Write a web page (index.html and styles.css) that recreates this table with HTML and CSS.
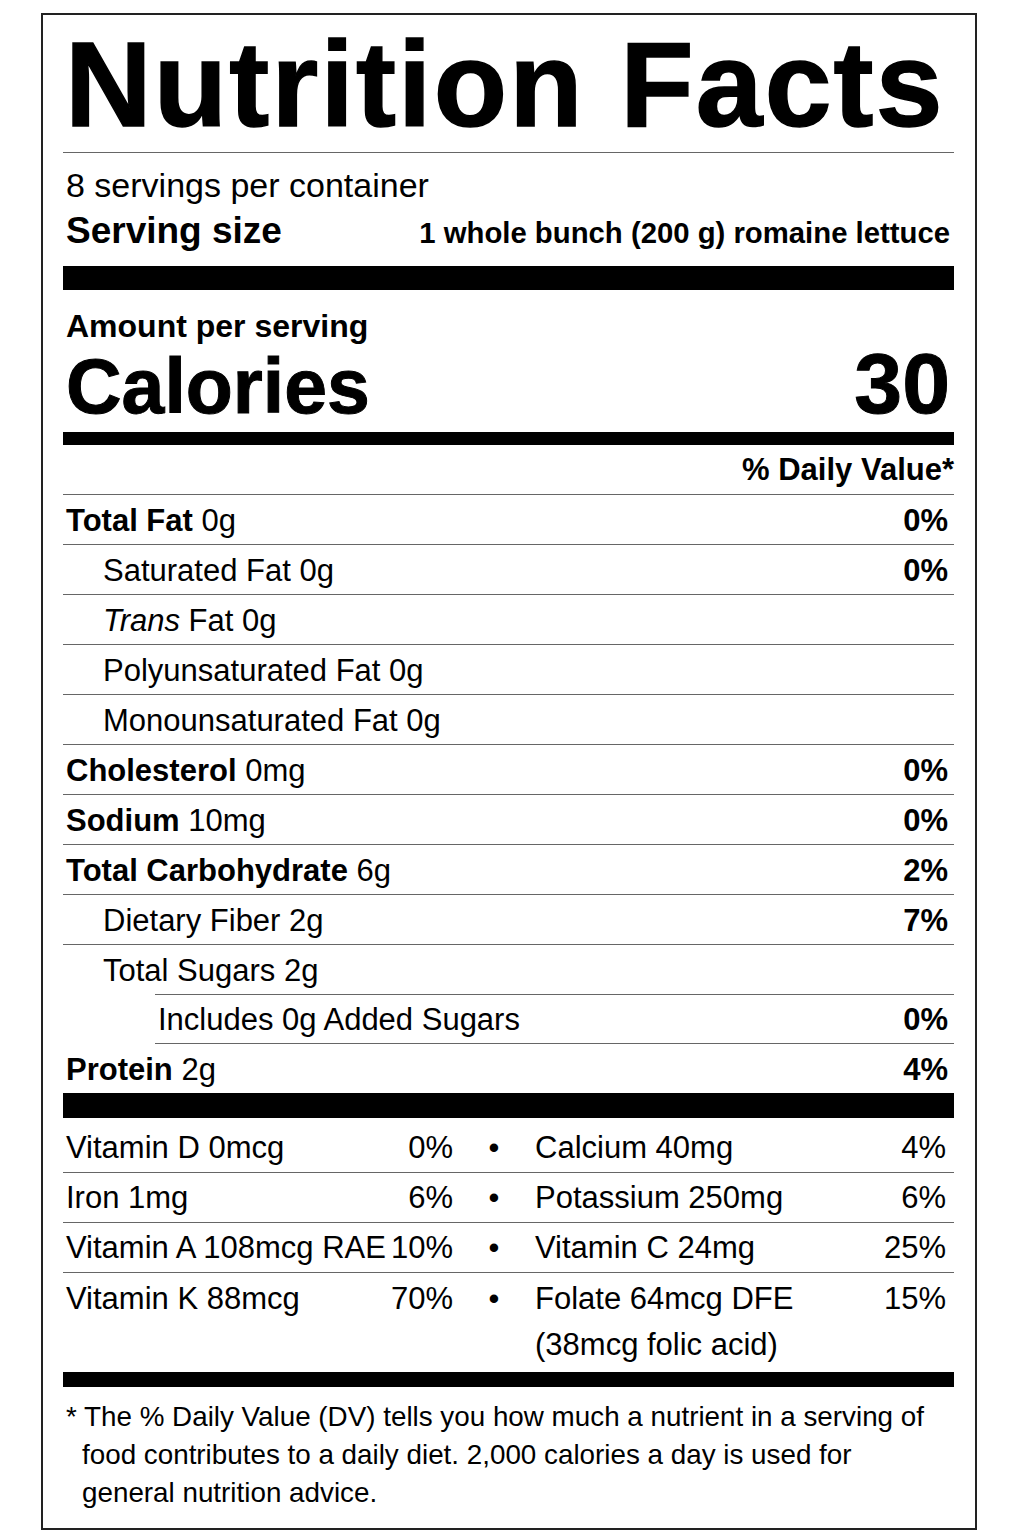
FILE: index.html
```html
<!DOCTYPE html>
<html lang="en">

<head>
    <meta charset="UTF-8">
    <meta name="viewport" content="width=device-width, initial-scale=1.0">
    <title>Nutrition Facts</title>
    <link rel="stylesheet" href="styles.css">
</head>

<body>

    <div class="label">
        <!-- Header -->
        <div class="title">Nutrition Facts</div>
        <div class="servings">8 servings per container</div>
        <div class="serving-size">
            <span class="bold">Serving size</span>
            <span class="size-value">1 whole bunch (200 g) romaine lettuce</span>
        </div>
        <div class="bar bar-thick"></div>

        <!-- Calories -->
        <div class="amount">Amount per serving</div>
        <div class="calories">
            <span class="cal-label">Calories</span>
            <span class="cal-value">30</span>
        </div>
        <div class="bar bar-medium"></div>

        <div class="dv-head">% Daily Value*</div>

        <!-- Nutrients -->
        <div class="row"><span><b>Total Fat</b> 0g</span><b>0%</b></div>
        <div class="row sub"><span>Saturated Fat 0g</span><b>0%</b></div>
        <div class="row sub"><span><i>Trans</i> Fat 0g</span></div>
        <div class="row sub"><span>Polyunsaturated Fat 0g</span></div>
        <div class="row sub"><span>Monounsaturated Fat 0g</span></div>
        <div class="row"><span><b>Cholesterol</b> 0mg</span><b>0%</b></div>
        <div class="row"><span><b>Sodium</b> 10mg</span><b>0%</b></div>
        <div class="row"><span><b>Total Carbohydrate</b> 6g</span><b>2%</b></div>
        <div class="row sub"><span>Dietary Fiber 2g</span><b>7%</b></div>
        <div class="row sub no-line"><span>Total Sugars 2g</span></div>
        <div class="row sub2"><span>Includes 0g Added Sugars</span><b>0%</b></div>
        <div class="row no-line"><span><b>Protein</b> 2g</span><b>4%</b></div>
        <div class="bar bar-thick"></div>

        <!-- Vitamins and minerals -->
        <div class="vitamins">
            <div class="vit-row first">
                <div class="vit"><span>Vitamin D 0mcg</span><span>0%</span></div>
                <div class="dot">&bull;</div>
                <div class="vit"><span>Calcium 40mg</span><span>4%</span></div>
            </div>
            <div class="vit-row">
                <div class="vit"><span>Iron 1mg</span><span>6%</span></div>
                <div class="dot">&bull;</div>
                <div class="vit"><span>Potassium 250mg</span><span>6%</span></div>
            </div>
            <div class="vit-row">
                <div class="vit"><span>Vitamin A 108mcg RAE</span><span>10%</span></div>
                <div class="dot">&bull;</div>
                <div class="vit"><span>Vitamin C 24mg</span><span>25%</span></div>
            </div>
            <div class="vit-row last">
                <div class="vit"><span>Vitamin K 88mcg</span><span>70%</span></div>
                <div class="dot">&bull;</div>
                <div class="vit"><span>Folate 64mcg DFE<br>(38mcg folic acid)</span><span>15%</span></div>
            </div>
        </div>
        <div class="bar bar-bottom"></div>

        <!-- Footnote -->
        <div class="footnote">* The % Daily Value (DV) tells you how much a nutrient in a serving of food contributes to a daily diet. 2,000 calories a day is used for general nutrition advice.</div>
    </div>

</body>

</html>
```

FILE: styles.css
```css
body {
    font-family: "Liberation Sans", Arial, sans-serif;
    background-color: #fff;
    color: #000;
    margin: 0;
}

.label {
    box-sizing: border-box;
    width: 936px;
    height: 1517px;
    margin: 13px 0 0 41px;
    padding: 0 21px 0 20px;
    border: 2px solid #222;
}

.bold,
b {
    font-weight: bold;
}

.title {
    font-size: 120px;
    font-weight: bold;
    line-height: 120px;
    letter-spacing: 2.2px;
    -webkit-text-stroke: 1.5px #000;
    padding: 9px 0 8px 2px;
    border-bottom: 1px solid #666;
}

.servings {
    font-size: 34px;
    line-height: 40px;
    padding: 12px 0 0 3px;
}

.serving-size {
    display: flex;
    justify-content: space-between;
    align-items: baseline;
    margin-top: 4px;
    padding: 0 4px 0 3px;
    line-height: 44px;
}

.serving-size .bold {
    font-size: 37px;
}

.serving-size .size-value {
    font-size: 29.3px;
    font-weight: bold;
}

.bar {
    background-color: #000;
}

.bar-thick {
    height: 24px;
    margin-top: 11px;
}

.row + .bar-thick {
    height: 25px;
    margin-top: 0;
}

.bar-medium {
    height: 13px;
    margin-top: 8px;
}

.bar-bottom {
    height: 15px;
}

.amount {
    font-size: 32px;
    font-weight: bold;
    line-height: 36px;
    padding: 0 3px;
    margin-top: 18px;
}

.calories {
    display: flex;
    justify-content: space-between;
    align-items: baseline;
    line-height: 76px;
    margin-top: 1px;
    padding: 0 4px 0 3px;
    font-weight: bold;
}

.cal-label {
    font-size: 77px;
    -webkit-text-stroke: 1px #000;
}

.cal-value {
    font-size: 86px;
    -webkit-text-stroke: 1px #000;
}

.dv-head {
    font-size: 31px;
    font-weight: bold;
    line-height: 40px;
    text-align: right;
    margin-top: 5px;
    padding-bottom: 4px;
    border-bottom: 1px solid #666;
}

.row {
    display: flex;
    justify-content: space-between;
    font-size: 31px;
    line-height: 47px;
    padding: 2px 6px 0 3px;
    border-bottom: 1px solid #666;
}

.row.sub {
    padding-left: 40px;
}

.row.sub2 {
    margin-left: 92px;
    padding-left: 3px;
    border-top: 1px solid #666;
    line-height: 46px;
}

.row.no-line {
    border-bottom: none;
    line-height: 47px;
}

.vit-row {
    display: grid;
    grid-template-columns: 387px 82px 1fr;
    font-size: 31px;
    line-height: 49px;
    padding: 0 8px 0 3px;
    border-bottom: 1px solid #666;
}

.vit-row.first {
    padding-top: 5px;
}

.vit-row.last {
    border-bottom: none;
    line-height: 46px;
    padding: 3px 8px 4px 3px;
}

.vit {
    display: flex;
    justify-content: space-between;
}

.dot {
    text-align: center;
}

.footnote {
    font-size: 27.8px;
    line-height: 38px;
    margin-top: 11px;
    padding: 0 16px 0 19px;
    text-indent: -16px;
}
```
